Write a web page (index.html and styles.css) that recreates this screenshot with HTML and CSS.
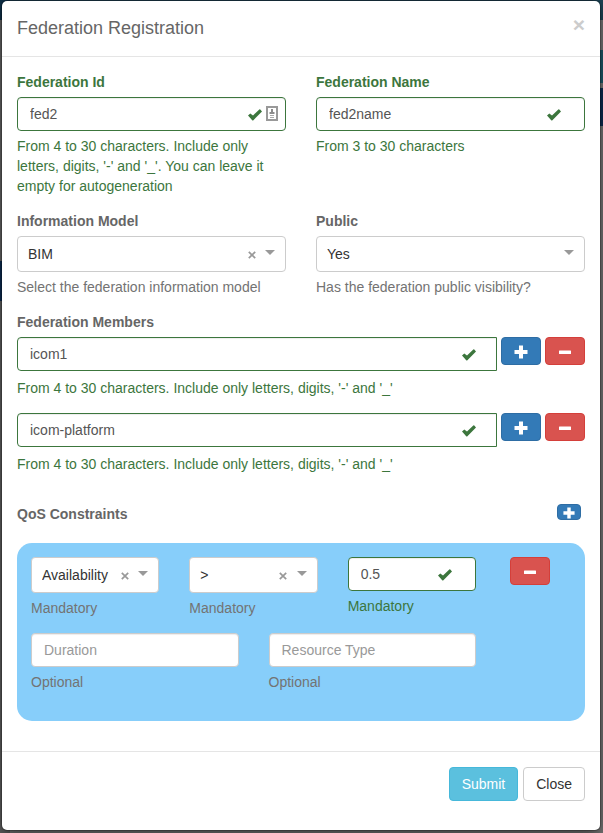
FILE: index.html
```html
<!DOCTYPE html>
<html lang="en">
<head>
<meta charset="utf-8">
<meta name="viewport" content="width=device-width, initial-scale=1">
<title>Federation Registration</title>
<link rel="stylesheet" href="styles.css">
</head>
<body>
<svg class="sprite" aria-hidden="true">
  <symbol id="check" viewBox="0 0 14 12"><path d="M0 6.6 2.3 4.5 5 6.5 11.3 0.4Q11.8 0 12.3 0.5L14 2.4 5.4 11.2Q4.8 11.8 4.2 11.2L1.8 8.6Z"/></symbol>
  <symbol id="plus" viewBox="0 0 14 14"><path d="M5 0.5h4V5h4.5v4H9v4.5H5V9H0.5V5H5z"/></symbol>
  <symbol id="minus" viewBox="0 0 14 14"><path d="M1.5 5.5h11q.5 0 .5.5v2.5q0 .5-.5.5h-11q-.5 0-.5-.5v-2.5q0-.5.5-.5z"/></symbol>
  <symbol id="card" viewBox="0 0 12 15"><path d="M1 1h10v13H1z" fill="#fff" stroke="#999" stroke-width="2"/><path d="M5 3h2v3h1.5v2h-5V6H5z" fill="#8c8c8c"/><path d="M4 9h4v1H4zM4 11h4v1H4z" fill="#aaa"/></symbol>
  <symbol id="cross" viewBox="0 0 8 8"><path d="M0.8 0.8 7.2 7.2M7.2 0.8 0.8 7.2" stroke="#999" stroke-width="1.7"/></symbol>
</svg>
<form class="modal" role="dialog" aria-labelledby="title">
  <header class="modal-header">
    <h1 id="title">Federation Registration</h1>
    <button type="button" class="dismiss" aria-label="Close dialog">×</button>
  </header>

  <div class="modal-body">
    <div class="row">
      <div class="group success">
        <label for="fed-id">Federation Id</label>
        <div class="field">
          <input id="fed-id" type="text" value="fed2">
          <svg class="tick"><use href="#check"/></svg>
          <svg class="card"><use href="#card"/></svg>
        </div>
        <p class="help">From 4 to 30 characters. Include only letters, digits, '-' and '_'. You can leave it empty for autogeneration</p>
      </div>
      <div class="group success">
        <label for="fed-name">Federation Name</label>
        <div class="field">
          <input id="fed-name" type="text" value="fed2name">
          <svg class="tick"><use href="#check"/></svg>
        </div>
        <p class="help">From 3 to 30 characters</p>
      </div>
    </div>

    <div class="row">
      <div class="group">
        <label for="model">Information Model</label>
        <div class="field picker">
          <select id="model"><option>BIM</option></select>
          <button type="button" class="clear" aria-label="Clear model"><svg><use href="#cross"/></svg></button>
        </div>
        <p class="help">Select the federation information model</p>
      </div>
      <div class="group">
        <label for="public">Public</label>
        <div class="field picker">
          <select id="public"><option>Yes</option><option>No</option></select>
        </div>
        <p class="help">Has the federation public visibility?</p>
      </div>
    </div>

    <label for="member-1">Federation Members</label>
    <div class="member success">
      <div class="member-line">
        <div class="field">
          <input id="member-1" type="text" value="icom1">
          <svg class="tick"><use href="#check"/></svg>
        </div>
        <button type="button" class="btn-icon add" aria-label="Add member"><svg><use href="#plus"/></svg></button>
        <button type="button" class="btn-icon remove" aria-label="Remove member"><svg><use href="#minus"/></svg></button>
      </div>
      <p class="help">From 4 to 30 characters. Include only letters, digits, '-' and '_'</p>
    </div>
    <div class="member success">
      <div class="member-line">
        <div class="field">
          <input id="member-2" type="text" value="icom-platform" aria-label="Federation member 2">
          <svg class="tick"><use href="#check"/></svg>
        </div>
        <button type="button" class="btn-icon add" aria-label="Add member"><svg><use href="#plus"/></svg></button>
        <button type="button" class="btn-icon remove" aria-label="Remove member"><svg><use href="#minus"/></svg></button>
      </div>
      <p class="help">From 4 to 30 characters. Include only letters, digits, '-' and '_'</p>
    </div>

    <div class="qos-head">
      <h2>QoS Constraints</h2>
      <button type="button" class="btn-icon add small" aria-label="Add constraint"><svg><use href="#plus"/></svg></button>
    </div>

    <section class="constraint">
      <div class="constraint-fields">
        <div class="row">
          <div class="group">
            <div class="field picker">
              <select aria-label="Metric"><option>Availability</option></select>
              <button type="button" class="clear" aria-label="Clear metric"><svg><use href="#cross"/></svg></button>
            </div>
            <p class="help">Mandatory</p>
          </div>
          <div class="group">
            <div class="field picker">
              <select aria-label="Comparator"><option>&gt;</option></select>
              <button type="button" class="clear" aria-label="Clear comparator"><svg><use href="#cross"/></svg></button>
            </div>
            <p class="help">Mandatory</p>
          </div>
          <div class="group success">
            <div class="field">
              <input type="text" value="0.5" aria-label="Threshold">
              <svg class="tick"><use href="#check"/></svg>
            </div>
            <p class="help">Mandatory</p>
          </div>
        </div>
        <div class="row">
          <div class="group">
            <div class="field"><input type="text" placeholder="Duration" aria-label="Duration"></div>
            <p class="help">Optional</p>
          </div>
          <div class="group">
            <div class="field"><input type="text" placeholder="Resource Type" aria-label="Resource Type"></div>
            <p class="help">Optional</p>
          </div>
        </div>
      </div>
      <div class="constraint-actions">
        <button type="button" class="btn-icon remove" aria-label="Remove constraint"><svg><use href="#minus"/></svg></button>
      </div>
    </section>
  </div>

  <footer class="modal-footer">
    <button type="submit" class="btn submit">Submit</button>
    <button type="button" class="btn">Close</button>
  </footer>
</form>
</body>
</html>
```
FILE: styles.css
```css
* {
  box-sizing: border-box;
}

html {
  min-height: 100%;
  background:
    linear-gradient(#1d4456 20px, #787878 20px 50px, #1d5a6b 50px 83px, #787878 83px 88px, #0c2c52 88px 126px, #777 126px) right top / 10px 100% no-repeat,
    linear-gradient(#0f3048 20px, #666 20px 261px, #0c2c52 261px 301px, #606060 301px) left top / 10px 100% no-repeat,
    linear-gradient(#1c3a4c 20px, #777 20px);
}

body {
  margin: 0;
  padding: 0 2px 2px 1px;
  color: #666;
  font: 14px/20px "Liberation Sans", Arial, sans-serif;
}

button,
input,
select {
  margin: 0;
  font: inherit;
}

.sprite {
  position: absolute;
  width: 0;
  height: 0;
}

.modal {
  border: 1px solid rgba(0, 0, 0, 0.2);
  border-radius: 6px;
  background: #fff;
  background-clip: padding-box;
  box-shadow: 0 5px 15px rgba(0, 0, 0, 0.5);
}

.modal-header {
  display: flex;
  align-items: flex-start;
  justify-content: space-between;
  padding: 15px;
  border-bottom: 1px solid #e5e5e5;
}

h1 {
  margin: 0;
  font-size: 18px;
  font-weight: 400;
  line-height: 25px;
}

.dismiss {
  padding: 0;
  border: 0;
  background: none;
  color: #ccc;
  font-size: 21px;
  font-weight: 700;
  line-height: 18px;
}

.modal-body {
  padding: 15px 15px 30px;
}

.row {
  display: flex;
  gap: 30px;
}

.group {
  flex: 1 1 0;
  min-width: 0;
  margin-bottom: 15px;
}

label {
  display: block;
  margin-bottom: 5px;
  font-weight: 700;
}

.field {
  position: relative;
  display: flex;
}

input,
select {
  width: 100%;
  min-width: 0;
  border: 1px solid #ccc;
  border-radius: 4px;
  background: #fff;
}

input {
  height: 34px;
  padding: 6px 12px;
  color: #555;
  box-shadow: inset 0 1px 1px rgba(0, 0, 0, 0.075);
}

input::placeholder {
  color: #999;
  opacity: 1;
}

select {
  height: 36px;
  padding: 0 10px;
  color: #333;
  appearance: none;
}

.picker::after {
  content: "";
  position: absolute;
  top: 14px;
  right: 11px;
  border: 5px solid transparent;
  border-top-color: #999;
  border-bottom: 0;
  pointer-events: none;
}

.clear {
  position: absolute;
  top: 10px;
  right: 26px;
  display: flex;
  align-items: center;
  justify-content: center;
  width: 17px;
  height: 17px;
  padding: 0;
  border: 0;
  background: none;
}

.clear svg {
  width: 8px;
  height: 8px;
}

.help {
  margin: 5px 0 0;
  color: #737373;
}

.success label,
.success .help {
  color: #3c763d;
}

.success input {
  border-color: #3c763d;
}

.tick {
  position: absolute;
  top: 12px;
  right: 24px;
  width: 14px;
  height: 12px;
  fill: #3c763d;
}

.card {
  position: absolute;
  top: 9px;
  right: 8px;
  width: 12px;
  height: 15px;
}

.member {
  margin-bottom: 15px;
}

.member-line {
  display: flex;
  align-items: flex-start;
  gap: 4px;
}

.member-line .field {
  flex: 1;
}

.member-line input {
  border-radius: 4px 0 0 4px;
}

.member-line .tick {
  right: 21px;
}

.member .help {
  margin-top: 7px;
}

.btn-icon {
  display: flex;
  align-items: center;
  justify-content: center;
  width: 40px;
  height: 28px;
  padding: 2px 1px 0 0;
  border: 1px solid;
  border-radius: 4px;
}

.btn-icon svg {
  width: 14px;
  height: 14px;
  fill: #fff;
}

.add {
  border-color: #2e6da4;
  background: #337ab7;
}

.remove {
  border-color: #d43f3a;
  background: #d9534f;
}

.small {
  width: 24px;
  height: 16px;
}

.small svg {
  width: 12px;
  height: 12px;
}

.qos-head {
  display: flex;
  align-items: flex-start;
  justify-content: space-between;
  margin: 30px 0 19px;
  padding-right: 4px;
}

h2 {
  margin: 0;
  font-size: 14px;
  line-height: 20px;
}

.constraint {
  display: flex;
  padding: 14px;
  border-radius: 15px;
  background: #87cefa;
}

.constraint-fields {
  flex: 1;
  min-width: 0;
}

.constraint-actions {
  width: 95px;
  padding-left: 34px;
}

.modal-footer {
  display: flex;
  justify-content: flex-end;
  gap: 5px;
  padding: 15px 15px 29px;
  border-top: 1px solid #e5e5e5;
}

.btn {
  padding: 6px 12px;
  border: 1px solid #ccc;
  border-radius: 4px;
  background: #fff;
  color: #333;
}

.submit {
  border-color: #46b8da;
  background: #5bc0de;
  color: #fff;
}
```
